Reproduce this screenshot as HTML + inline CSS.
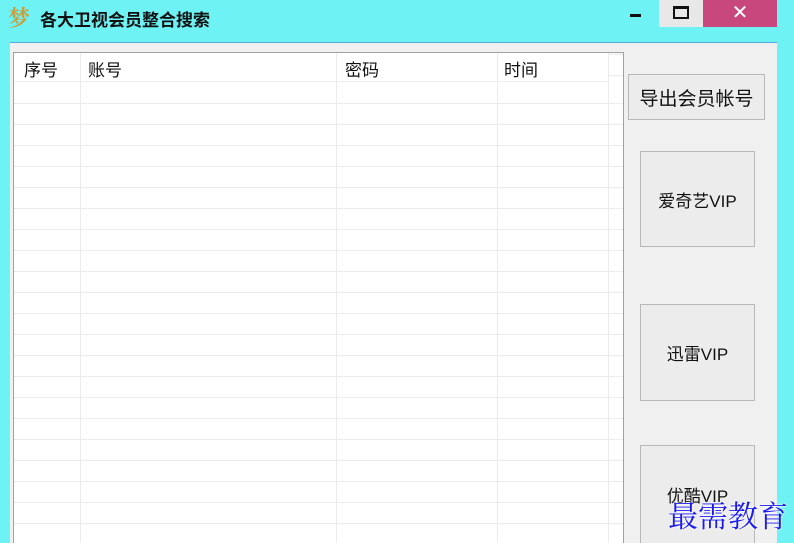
<!DOCTYPE html>
<html><head><meta charset="utf-8"><style>
*{margin:0;padding:0;box-sizing:border-box}
html,body{width:794px;height:543px;overflow:hidden}
body{background:#6ef2f4;position:relative;font-family:"Liberation Sans","Noto Sans CJK SC",sans-serif}
.a{position:absolute}
.title{left:40px;top:6px;font-size:17px;font-weight:bold;color:#111}
.logo{left:8px;top:2px;font-size:22px;font-weight:bold;color:#c8a040;font-family:"Noto Serif CJK SC",serif}
.client{left:10px;top:42px;width:767px;height:501px;background:#f0f0f0;border-top:1px solid #5ad}
.lv{left:13px;top:52px;width:611px;height:491px;background:#fff;border:1px solid #a0a0a0;border-bottom:none;
background-image:repeating-linear-gradient(to bottom,transparent 0,transparent 20px,#ececec 20px,#ececec 21px);background-position:0 30px;background-repeat:repeat-y}
.hdr{left:14px;top:53px;width:594px;height:29px;background:#fff;border-bottom:1px solid #eee}
.vl{top:53px;width:1px;height:490px;background:#ececec}
.h{top:56px;font-size:17px;color:#111}
.btn{background:#ececec;border:1px solid #b8b8b8;font-size:17px;color:#111;display:flex;align-items:center;justify-content:center}
</style></head><body>
<div class="a logo">梦</div>
<div class="a title">各大卫视会员整合搜索</div>
<div class="a" style="left:630px;top:14px;width:11px;height:3px;background:#111"></div>
<div class="a" style="left:659px;top:0;width:44px;height:27px;background:#e8e8e8"></div>
<div class="a" style="left:673px;top:6px;width:16px;height:13px;border:2px solid #111;border-top-width:3px"></div>
<div class="a" style="left:703px;top:0;width:74px;height:27px;background:#c8487e;color:#fff;font-size:20px;text-align:center;line-height:26px">✕</div>
<div class="a client"></div>
<div class="a lv"></div>
<div class="a hdr"></div>
<div class="a vl" style="left:80px"></div>
<div class="a vl" style="left:336px"></div>
<div class="a vl" style="left:497px"></div>
<div class="a vl" style="left:608px"></div>
<div class="a h" style="left:24px">序号</div>
<div class="a h" style="left:88px">账号</div>
<div class="a h" style="left:345px">密码</div>
<div class="a h" style="left:504px">时间</div>
<div class="a btn" style="left:628px;top:74px;width:137px;height:46px;font-size:19px">导出会员帐号</div>
<div class="a btn" style="left:640px;top:151px;width:115px;height:96px">爱奇艺VIP</div>
<div class="a btn" style="left:640px;top:304px;width:115px;height:97px">迅雷VIP</div>
<div class="a btn" style="left:640px;top:445px;width:115px;height:110px;align-items:flex-start;padding-top:36px">优酷VIP</div>
<div class="a" style="left:668px;top:492px;font-size:30px;color:#1a1aee;font-family:'Noto Serif CJK SC',serif;text-shadow:0 0 2px #fff,0 0 2px #fff">最需教育</div>
</body></html>
